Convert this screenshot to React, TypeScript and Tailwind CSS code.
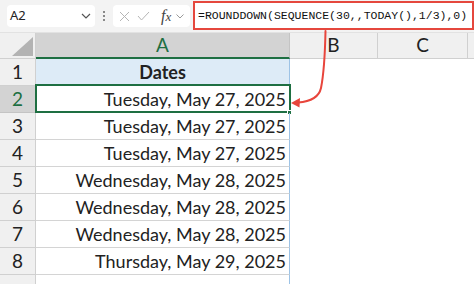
import React from "react";

const rows: { n: number; text: string }[] = [
  { n: 2, text: "Tuesday, May 27, 2025" },
  { n: 3, text: "Tuesday, May 27, 2025" },
  { n: 4, text: "Tuesday, May 27, 2025" },
  { n: 5, text: "Wednesday, May 28, 2025" },
  { n: 6, text: "Wednesday, May 28, 2025" },
  { n: 7, text: "Wednesday, May 28, 2025" },
  { n: 8, text: "Thursday, May 29, 2025" },
];

const cellFont = { fontFamily: "Lato, 'Open Sans', sans-serif" };

export default function App() {
  return (
    <div
      className="relative w-[474px] h-[284px] overflow-hidden bg-white text-[#222]"
      style={cellFont}
    >
      {/* Formula bar */}
      <div className="flex items-center h-[33px] bg-[#f3f3f3] border-b border-[#e2e2e2]">
        <div className="ml-[7px] w-[88px] h-[22px] bg-white rounded-[4px] flex items-center justify-between pl-[3px] pr-[3px]">
          <span
            className="text-[13px] text-[#222]"
            style={{ fontFamily: "'Noto Sans', 'Open Sans', sans-serif" }}
          >
            A2
          </span>
          <svg width="10" height="6" viewBox="0 0 10 6" className="mr-[1px]">
            <path d="M1 1 L5 5 L9 1" fill="none" stroke="#555" strokeWidth="1.2" />
          </svg>
        </div>
        <div className="w-[18px] flex flex-col items-center gap-[2px]">
          <span className="w-[2px] h-[2px] bg-[#666] rounded-full" />
          <span className="w-[2px] h-[2px] bg-[#666] rounded-full" />
          <span className="w-[2px] h-[2px] bg-[#666] rounded-full" />
        </div>
        <div className="w-[77px] h-[22px] bg-white rounded-[4px] flex items-center pl-[6px]">
          <svg width="11" height="11" viewBox="0 0 11 11">
            <path d="M1 1 L10 10 M10 1 L1 10" stroke="#b5b5b5" strokeWidth="1" fill="none" />
          </svg>
          <svg width="13" height="10" viewBox="0 0 13 10" className="ml-[7px]">
            <path d="M1 5 L4.5 9 L12 1" stroke="#b5b5b5" strokeWidth="1" fill="none" />
          </svg>
          <span
            className="ml-[11px] text-[16px] italic text-[#444] leading-none"
            style={{ fontFamily: "'Liberation Serif', serif" }}
          >
            f<span className="text-[13px]">x</span>
          </span>
          <svg width="8" height="5" viewBox="0 0 8 5" className="ml-[5px]">
            <path d="M0.5 0.5 L4 4 L7.5 0.5" fill="none" stroke="#999" strokeWidth="1" />
          </svg>
        </div>
        <div className="ml-[3px] flex-1 h-[29px] -mt-[1px] border-2 border-[#e5473d] bg-white flex items-center pl-[3px]">
          <span
            className="text-[11.5px] text-[#111] whitespace-nowrap"
            style={{ fontFamily: "'Liberation Mono', monospace" }}
          >
            =ROUNDDOWN(SEQUENCE(30,,TODAY(),1/3),0)
          </span>
        </div>
      </div>

      {/* Column headers */}
      <div className="flex h-[26px] bg-[#f0f0f0]">
        <div className="relative w-[36px] border-r border-b border-[#d0d0d0]">
          <svg width="21" height="19" viewBox="0 0 21 19" className="absolute right-[2px] bottom-[2px]">
            <polygon points="21,0 21,19 0,19" fill="#b3b3b3" />
          </svg>
        </div>
        <div className="w-[254px] bg-[#d3d3d3] border-r border-[#c4c4c4] border-b-2 border-b-[#1e6f42] flex items-center justify-center text-[19px] text-[#1e6f42]">
          A
        </div>
        <div className="w-[88px] border-r border-b border-[#d0d0d0] flex items-center justify-center text-[19px] text-[#222]">
          B
        </div>
        <div className="w-[90px] border-r border-b border-[#d0d0d0] flex items-center justify-center text-[19px] text-[#222]">
          C
        </div>
        <div className="flex-1 border-b border-[#d0d0d0]" />
      </div>

      {/* Row 1 */}
      <div className="flex h-[27px]">
        <div className="w-[36px] bg-[#f0f0f0] border-r border-b border-[#d0d0d0] flex items-center justify-center text-[19px]">
          1
        </div>
        <div className="w-[254px] bg-[#ddebf7] border-r border-[#9dc3e6] border-b border-b-[#d4d4d4] flex items-center justify-center text-[18px] font-bold">
          Dates
        </div>
        <div className="flex-1" />
      </div>

      {rows.map((r) => {
        const sel = r.n === 2;
        return (
          <div key={r.n} className="flex h-[27px]">
            <div
              className={
                sel
                  ? "w-[36px] bg-[#d3d3d3] border-r border-b border-[#c4c4c4] flex items-center justify-center text-[19px] text-[#1e6f42]"
                  : "w-[36px] bg-[#f0f0f0] border-r border-b border-[#d0d0d0] flex items-center justify-center text-[19px]"
              }
            >
              {r.n}
            </div>
            <div className="relative w-[254px] border-r border-[#9dc3e6] border-b border-b-[#d4d4d4] flex items-center justify-end pr-[3px] text-[18px] whitespace-nowrap">
              {r.text}
              {sel && (
                <>
                  <div className="absolute -left-[1px] -top-[2px] -right-[2px] -bottom-[1px] border-2 border-[#1e6f42]" />
                  <div className="absolute -right-[3px] -bottom-[3px] w-[5px] h-[5px] bg-[#1e6f42] border border-white" />
                </>
              )}
            </div>
            <div className="flex-1" />
          </div>
        );
      })}

      {/* Row 9 */}
      <div className="flex h-[27px]">
        <div className="w-[36px] bg-[#f0f0f0] border-r border-[#d0d0d0]" />
        <div className="w-[254px] border-r border-[#9dc3e6]" />
        <div className="flex-1" />
      </div>

      {/* Arrow */}
      <svg
        width="474"
        height="284"
        viewBox="0 0 474 284"
        className="absolute left-0 top-0 pointer-events-none"
      >
        <path
          d="M325.5 31 C325 55 323 78 321 88 C319 97 312 101.5 298 102.5"
          fill="none"
          stroke="#e8453c"
          strokeWidth="2"
          strokeLinecap="round"
        />
        <polygon points="291,103 300,98 299.5,107.5" fill="#e8453c" />
      </svg>
    </div>
  );
}
